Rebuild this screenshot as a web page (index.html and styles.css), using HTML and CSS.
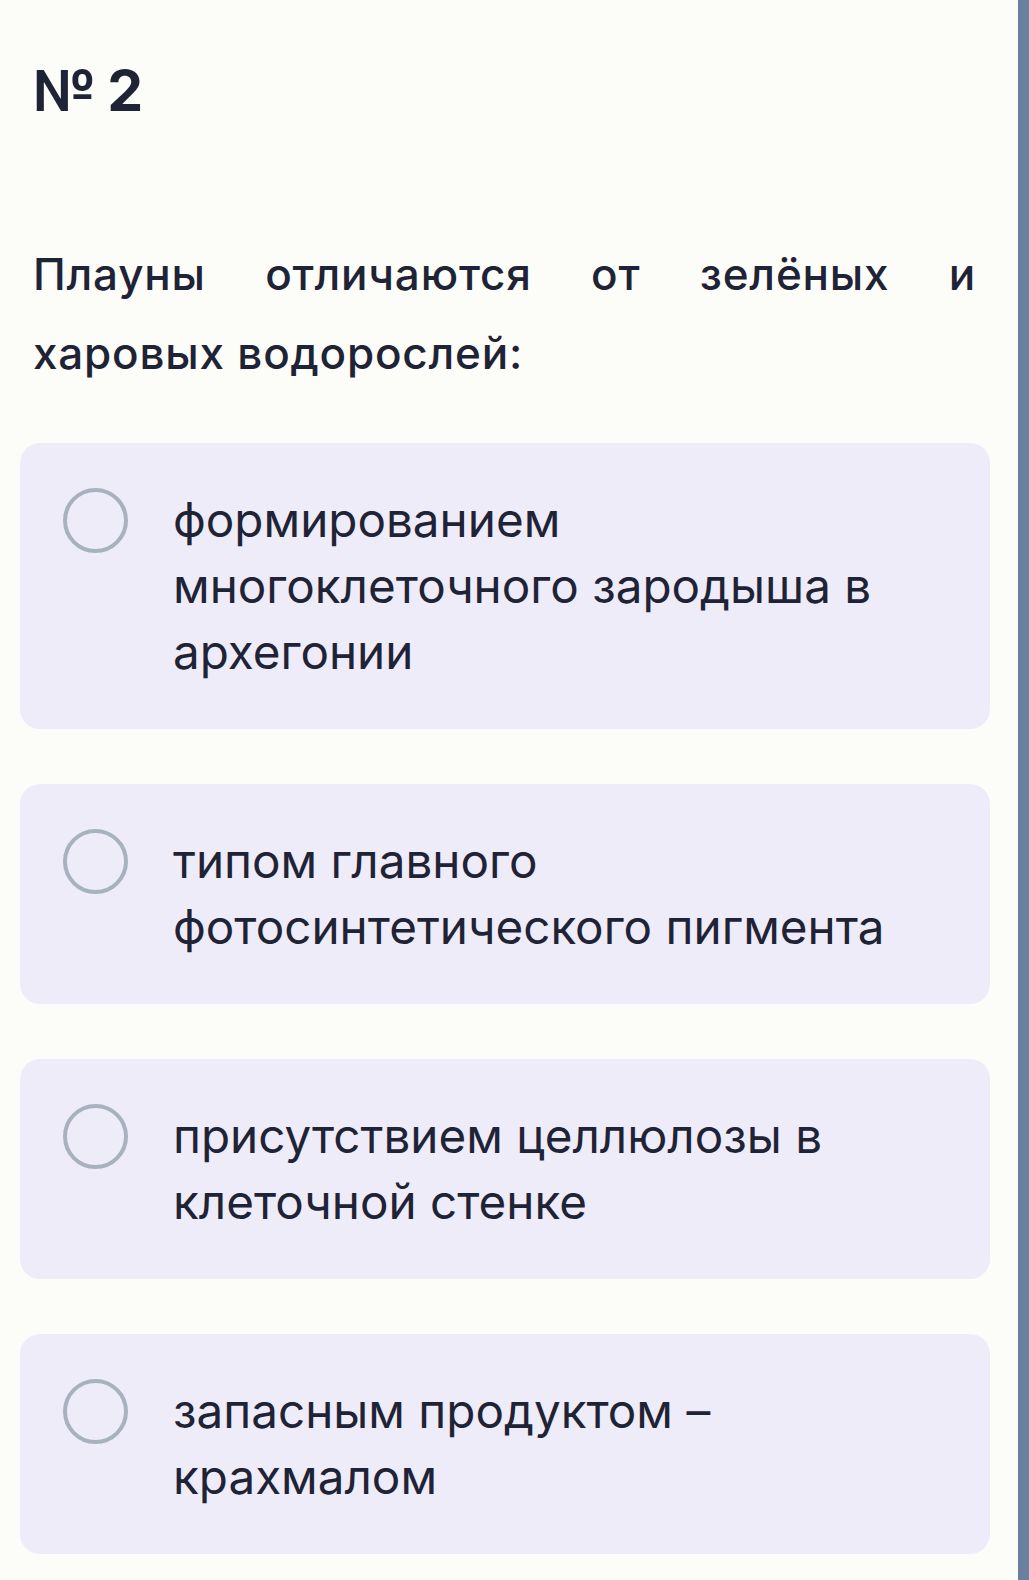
FILE: index.html
```html
<!DOCTYPE html>
<html lang="ru">
<head>
    <meta charset="UTF-8">
    <meta name="viewport" content="width=device-width, initial-scale=1.0">
    <title>№ 2</title>
    <link rel="stylesheet" href="styles.css">
</head>
<body>
    <div class="page">
        <h1 class="task-number">№ 2</h1>
        <p class="question">Плауны отличаются от зелёных и харовых водорослей:</p>

        <div class="options">
            <label class="option">
                <span class="radio"></span>
                <span class="option-text">формированием многоклеточного зародыша в архегонии</span>
            </label>
            <label class="option">
                <span class="radio"></span>
                <span class="option-text">типом главного фотосинтетического пигмента</span>
            </label>
            <label class="option">
                <span class="radio"></span>
                <span class="option-text">присутствием целлюлозы в клеточной стенке</span>
            </label>
            <label class="option">
                <span class="radio"></span>
                <span class="option-text">запасным продуктом – крахмалом</span>
            </label>
        </div>
    </div>
    <div class="edge"></div>
</body>
</html>
```

FILE: styles.css
```css
body {
    font-family: Inter, 'Noto Sans', sans-serif;
    background: #fcfcf8;
    color: #1f2336;
    display: flex;
    margin: 0;
    min-height: 100vh;
}

.page {
    flex: 1;
    padding: 0 28px 0 20px;
}

.edge {
    width: 11px;
    background: #6b809f;
}

.task-number {
    font-size: 57px;
    font-weight: 700;
    line-height: 1;
    margin: 62px 0 0 13px;
    letter-spacing: -1px;
}

.question {
    font-size: 44px;
    font-weight: 500;
    line-height: 79px;
    text-align: justify;
    margin: 116px 14px 0 13px;
    letter-spacing: 0.8px;
}

.options {
    display: flex;
    flex-direction: column;
    gap: 55px;
    margin-top: 50px;
}

.option {
    display: flex;
    align-items: flex-start;
    gap: 45px;
    background: #efecf9;
    border-radius: 20px;
    padding: 44px 30px 44px 43px;
}

.radio {
    flex: none;
    width: 57px;
    height: 57px;
    margin-top: 1px;
    border: 4px solid #a8b2bf;
    border-radius: 50%;
}

.option-text {
    font-size: 47.6px;
    line-height: 66px;
    font-weight: 400;
}
```
